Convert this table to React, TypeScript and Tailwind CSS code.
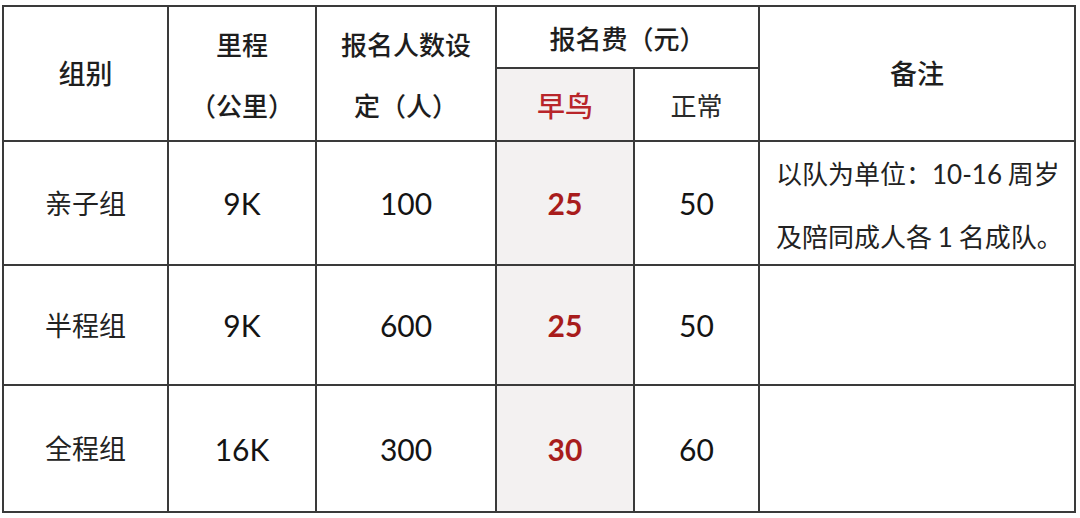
import React from "react";

const cjk = "font-['Noto_Sans_CJK_SC',sans-serif]";
const num = "font-['Lato','Noto_Sans_CJK_SC',sans-serif]";
const cell =
  "border-r-2 border-b-2 border-[#3a3a3a] flex items-center justify-center text-[#1e1e1e]";
const bird = "bg-[#f3f1f1]";

function Num({ v, red }: { v: string; red?: boolean }) {
  return (
    <span
      className={`${num} text-[30px] leading-none ${
        red ? "font-bold text-[#a81c1c]" : "text-[#141414]"
      }`}
    >
      {v}
    </span>
  );
}

export default function App() {
  const rows = [
    { name: "亲子组", km: "9K", cap: "100", early: "25", normal: "50", note: true },
    { name: "半程组", km: "9K", cap: "600", early: "25", normal: "50", note: false },
    { name: "全程组", km: "16K", cap: "300", early: "30", normal: "60", note: false },
  ];
  return (
    <div className="w-[1080px] h-[518px] bg-white overflow-hidden">
      <div
        className={`ml-[2px] mt-[5px] grid w-max border-l-2 border-t-2 border-[#3a3a3a] grid-cols-[165px_148px_180px_138px_125px_316px] grid-rows-[62px_73px_124px_120px_127px] ${cjk}`}
      >
        <div className={`${cell} row-span-2 text-[27px] font-medium`}>组别</div>
        <div className={`${cell} row-span-2 flex-col text-[26px] font-medium leading-[61px]`}>
          <span>里程</span>
          <span>（公里）</span>
        </div>
        <div className={`${cell} row-span-2 flex-col text-[26px] font-medium leading-[61px]`}>
          <span className="whitespace-nowrap">报名人数设</span>
          <span className="whitespace-nowrap">定（人）</span>
        </div>
        <div className={`${cell} col-span-2 text-[26px] font-medium`}>报名费（元）</div>
        <div className={`${cell} row-span-2 text-[27px] font-medium`}>备注</div>
        <div className={`${cell} ${bird} text-[28px] font-medium text-[#b8252a]`}>早鸟</div>
        <div className={`${cell} text-[26px] text-[#2a2a2a]`}>正常</div>

        {rows.map((r) => (
          <React.Fragment key={r.name}>
            <div className={`${cell} text-[27px] text-[#222]`}>{r.name}</div>
            <div className={cell}>
              <Num v={r.km} />
            </div>
            <div className={cell}>
              <Num v={r.cap} />
            </div>
            <div className={`${cell} ${bird}`}>
              <Num v={r.early} red />
            </div>
            <div className={cell}>
              <Num v={r.normal} />
            </div>
            <div className={`${cell} !items-start !justify-start pl-[16px]`}>
              {r.note && (
                <div className="flex flex-col text-[26px] leading-[61px] text-[#222] whitespace-nowrap">
                  <span>
                    以队为单位：<span className={num}>10-16</span> 周岁
                  </span>
                  <span>
                    及陪同成人各 <span className={num}>1</span> 名成队。
                  </span>
                </div>
              )}
            </div>
          </React.Fragment>
        ))}
      </div>
    </div>
  );
}
